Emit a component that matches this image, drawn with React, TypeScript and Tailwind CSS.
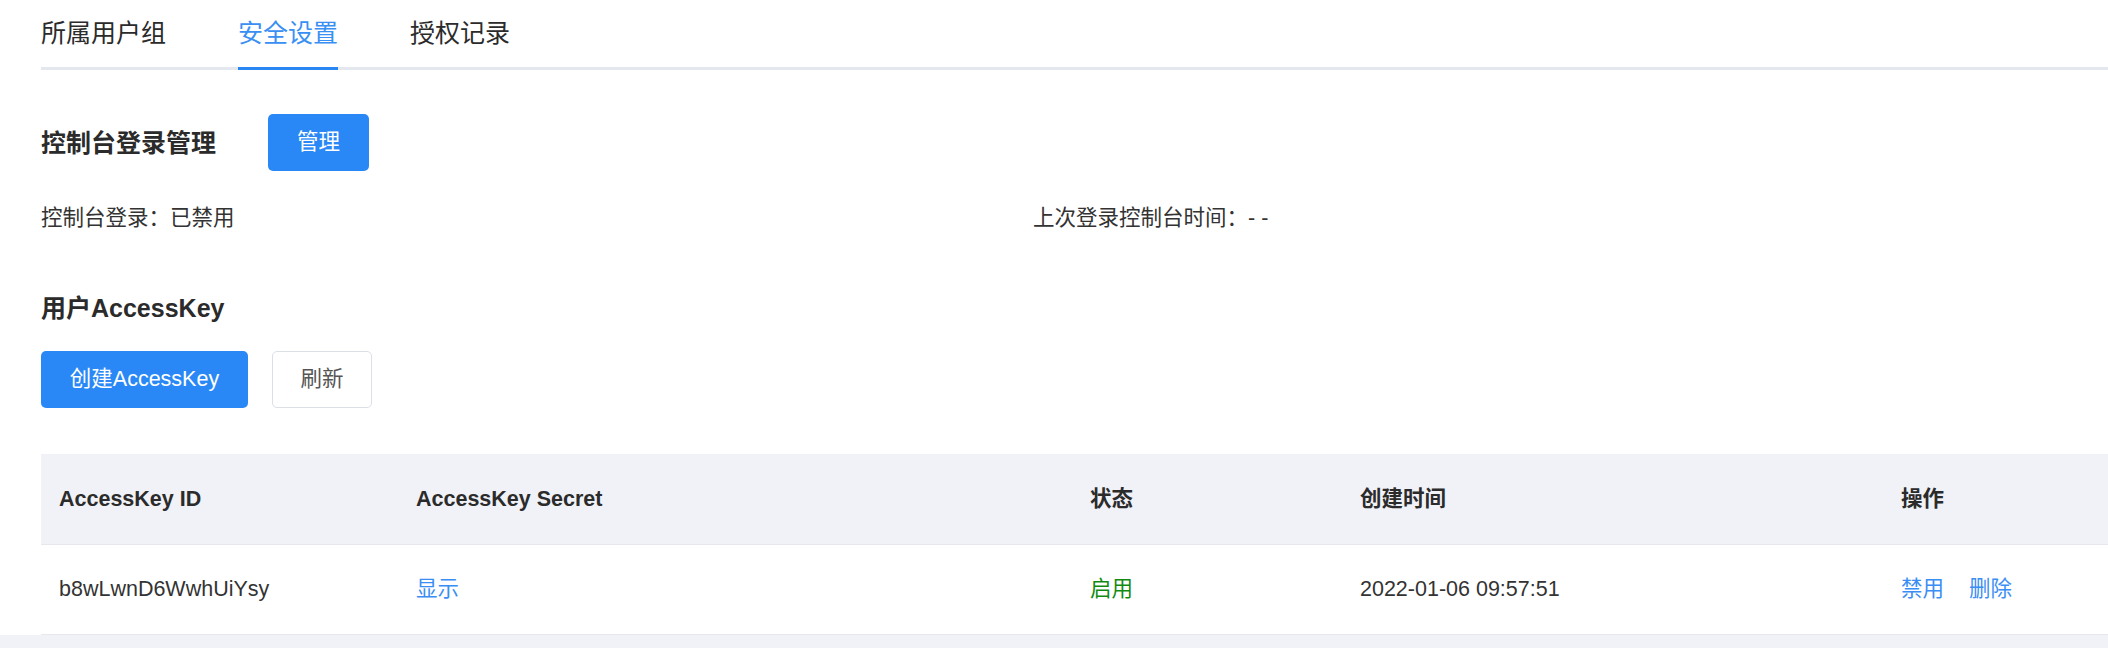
import { FC } from 'react';
import clsx from 'clsx';

const FONT = '"Liberation Sans", "Noto Sans CJK SC", sans-serif';

const tabs = ['所属用户组', '安全设置', '授权记录'];

interface KeyRow {
  id: string;
  status: string;
  created: string;
}

const rows: KeyRow[] = [{ id: 'b8wLwnD6WwhUiYsy', status: '启用', created: '2022-01-06 09:57:51' }];

const Tabs: FC<{ active: number }> = ({ active }) => (
  <div className="flex gap-[72px] border-b-[3px] border-[#e4e7ed]">
    {tabs.map((t, i) => (
      <div
        key={t}
        className={clsx(
          'flex h-[70px] items-center -mb-[3px] border-b-[3px] text-[25px]',
          i === active ? 'border-[#2a86f3] text-[#3a8ff3]' : 'border-transparent text-[#2b2b2b]'
        )}
      >
        {t}
      </div>
    ))}
  </div>
);

const App: FC = () => {
  return (
    <div className="min-h-screen bg-[#f0f2f7]" style={{ fontFamily: FONT }}>
      <div className="bg-white pl-[41px]">
        <Tabs active={1} />

        {/* console login */}
        <div className="mt-[44px] flex items-center">
          <div className="w-[227px] text-[25px] font-bold leading-[34px] text-[#2b2b2b]">控制台登录管理</div>
          <button
            type="button"
            className="h-[57px] w-[101px] rounded-[5px] bg-[#2988f6] text-[21.5px] text-white"
          >
            管理
          </button>
        </div>
        <div className="mt-[32px] grid grid-cols-[992px_1fr] text-[21.5px] leading-[30px] text-[#333]">
          <div>控制台登录：已禁用</div>
          <div>上次登录控制台时间：- -</div>
        </div>

        {/* access keys */}
        <div className="mt-[58px] text-[25px] font-bold leading-[34px] text-[#2b2b2b]">用户AccessKey</div>
        <div className="mt-[26px] flex gap-[24px]">
          <button
            type="button"
            className="h-[57px] w-[207px] rounded-[5px] bg-[#2988f6] text-[21.5px] text-white"
          >
            创建AccessKey
          </button>
          <button
            type="button"
            className="h-[57px] w-[100px] rounded-[5px] border border-[#dcdfe6] bg-white text-[21.5px] text-[#555]"
          >
            刷新
          </button>
        </div>

        <table className="mt-[46px] w-full table-fixed border-collapse text-[21.5px]">
          <colgroup>
            <col className="w-[357px]" />
            <col className="w-[674px]" />
            <col className="w-[270px]" />
            <col className="w-[541px]" />
            <col />
          </colgroup>
          <thead>
            <tr className="h-[90px] border-b border-[#e6e8ee] bg-[#f0f2f7] text-left [&>th]:px-[18px] [&>th]:font-bold [&>th]:text-[#2b2b2b]">
              <th>AccessKey ID</th>
              <th>AccessKey Secret</th>
              <th>状态</th>
              <th>创建时间</th>
              <th>操作</th>
            </tr>
          </thead>
          <tbody>
            {rows.map((r) => (
              <tr key={r.id} className="h-[90px] border-b border-[#e6e8ee] [&>td]:px-[18px] text-[#333]">
                <td>{r.id}</td>
                <td>
                  <span className="text-[#3a8ef3]">显示</span>
                </td>
                <td className="text-[#128a12]">{r.status}</td>
                <td>{r.created}</td>
                <td>
                  <span className="text-[#3a8ef3]">禁用</span>
                  <span className="ml-[25px] text-[#3a8ef3]">删除</span>
                </td>
              </tr>
            ))}
          </tbody>
        </table>
      </div>
    </div>
  );
};

export default App;
